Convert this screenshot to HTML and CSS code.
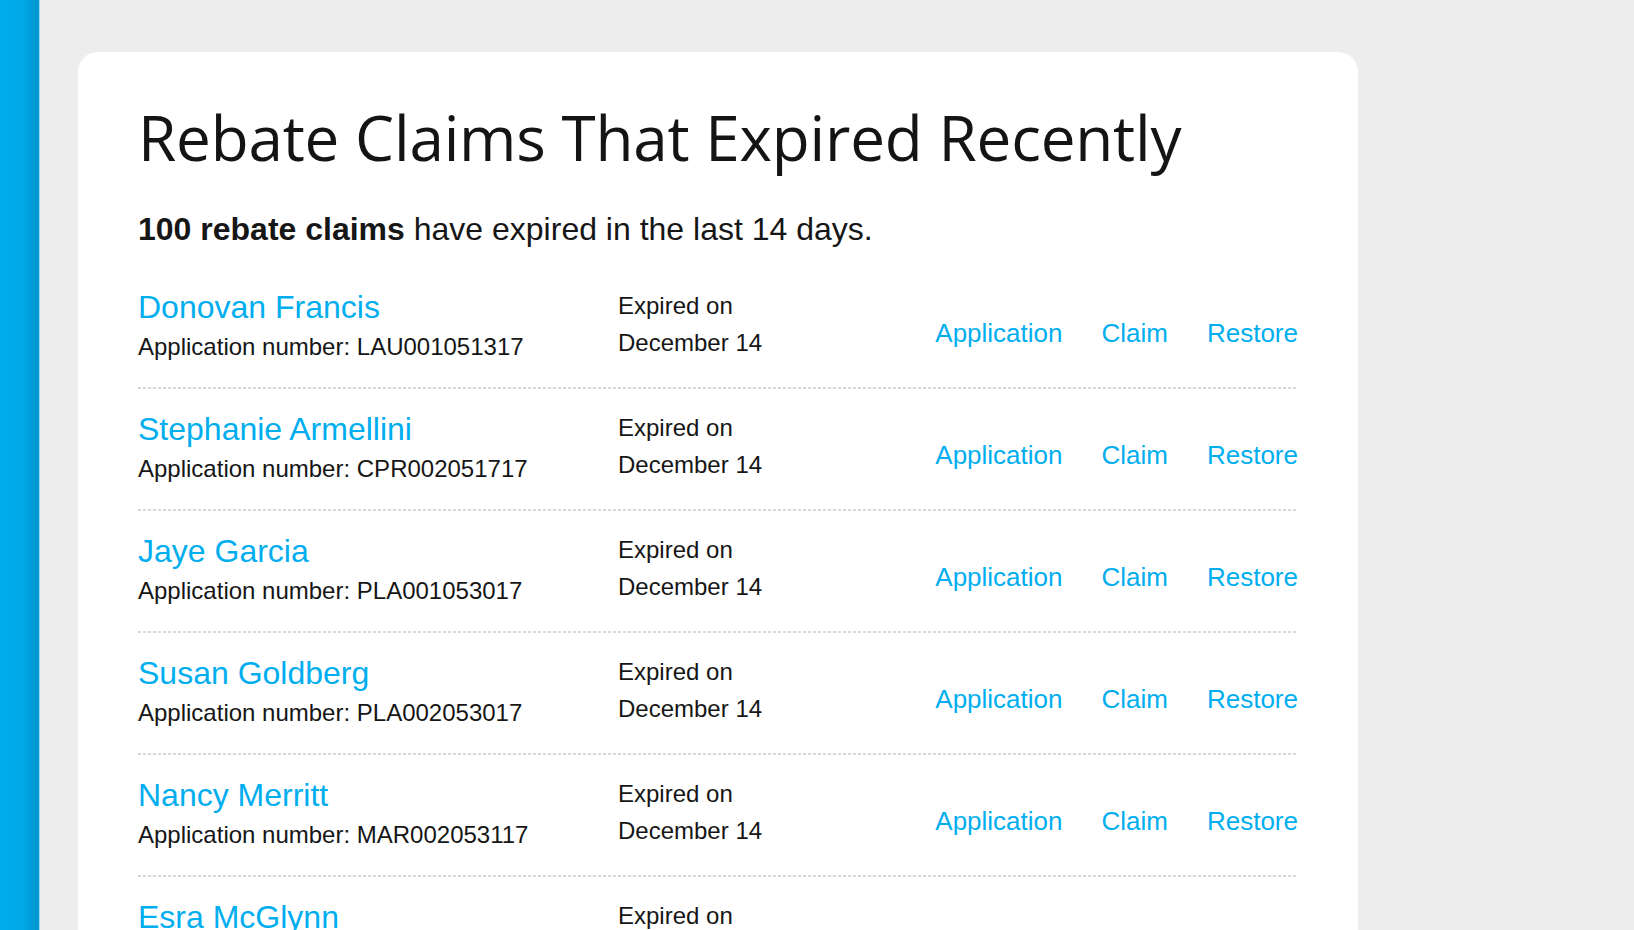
FILE: index.html
```html
<!DOCTYPE html>
<html lang="en">
<head>
<meta charset="utf-8">
<title>Rebate Claims That Expired Recently</title>
<link rel="stylesheet" href="styles.css">
</head>
<body>
<div class="stripe"></div>
<main class="main">
  <section class="card">
    <h1 class="title">Rebate Claims That Expired Recently</h1>
    <p class="summary"><strong>100 rebate claims</strong> have expired in the last 14 days.</p>
    <ul class="claims">
      <li class="claim">
        <div class="who"><a class="name" href="#">Donovan Francis</a><div class="appno">Application number: LAU001051317</div></div>
        <div class="expiry">Expired on<br>December 14</div>
        <nav class="actions"><a href="#">Application</a><a href="#">Claim</a><a href="#">Restore</a></nav>
      </li>
      <li class="claim">
        <div class="who"><a class="name" href="#">Stephanie Armellini</a><div class="appno">Application number: CPR002051717</div></div>
        <div class="expiry">Expired on<br>December 14</div>
        <nav class="actions"><a href="#">Application</a><a href="#">Claim</a><a href="#">Restore</a></nav>
      </li>
      <li class="claim">
        <div class="who"><a class="name" href="#">Jaye Garcia</a><div class="appno">Application number: PLA001053017</div></div>
        <div class="expiry">Expired on<br>December 14</div>
        <nav class="actions"><a href="#">Application</a><a href="#">Claim</a><a href="#">Restore</a></nav>
      </li>
      <li class="claim">
        <div class="who"><a class="name" href="#">Susan Goldberg</a><div class="appno">Application number: PLA002053017</div></div>
        <div class="expiry">Expired on<br>December 14</div>
        <nav class="actions"><a href="#">Application</a><a href="#">Claim</a><a href="#">Restore</a></nav>
      </li>
      <li class="claim">
        <div class="who"><a class="name" href="#">Nancy Merritt</a><div class="appno">Application number: MAR002053117</div></div>
        <div class="expiry">Expired on<br>December 14</div>
        <nav class="actions"><a href="#">Application</a><a href="#">Claim</a><a href="#">Restore</a></nav>
      </li>
      <li class="claim">
        <div class="who"><a class="name" href="#">Esra McGlynn</a><div class="appno">Application number: MCG001053217</div></div>
        <div class="expiry">Expired on<br>December 14</div>
        <nav class="actions"><a href="#">Application</a><a href="#">Claim</a><a href="#">Restore</a></nav>
      </li>
    </ul>
  </section>
</main>
</body>
</html>
```

FILE: styles.css
```css
html, body {
  margin: 0;
  height: 100%;
}
body {
  display: flex;
  background: #ededed;
  overflow: hidden;
  font-family: "Liberation Sans", Arial, sans-serif;
  color: #161616;
}
.stripe {
  flex: 0 0 40px;
  height: 100%;
  background: linear-gradient(to right, #00acec 0%, #00a9e8 55%, #0096cf 96%, #6cc6ea 98%, #e0eef4 100%);
}
.main {
  flex: 1;
  padding: 52px 0 0 38px;
}
.card {
  width: 1160px;
  min-height: 1000px;
  padding: 46px 60px 0 60px;
  background: #fff;
  border-radius: 20px 20px 0 0;
}
.title {
  margin: 0;
  font-family: "Open Sans", "Noto Sans", sans-serif;
  font-weight: 400;
  font-size: 62px;
  line-height: 79px;
  color: #141414;
  letter-spacing: -0.2px;
}
.summary {
  margin: 32px 0 0;
  font-size: 32px;
  line-height: 40px;
}
.summary strong {
  font-weight: 700;
}
.claims {
  list-style: none;
  margin: 18px 0 0;
  padding: 0;
}
.claim {
  display: grid;
  grid-template-columns: 480px 1fr auto;
  padding: 20px 0 22px;
  background: repeating-linear-gradient(to right, #d9d9d9 0 3px, transparent 3px 5px) left bottom / 100% 2px no-repeat;
}
a {
  color: #00aeef;
  text-decoration: none;
}
.name {
  display: block;
  font-size: 32px;
  line-height: 40px;
}
.appno {
  font-size: 24px;
  line-height: 40px;
}
.expiry {
  font-size: 24px;
  line-height: 37px;
}
.actions {
  display: flex;
  gap: 39px;
  margin-top: 30px;
  align-self: start;
  font-size: 26px;
  line-height: 32px;
}
```
